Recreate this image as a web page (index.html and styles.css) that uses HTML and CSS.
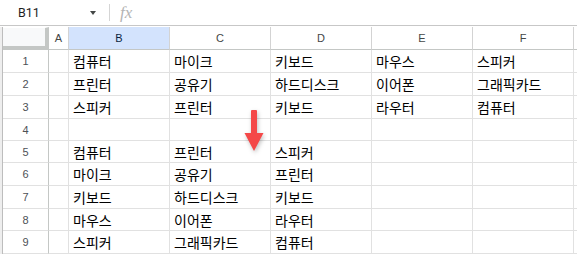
FILE: index.html
```html
<!DOCTYPE html>
<html lang="ko">
<head>
    <meta charset="UTF-8">
    <meta name="viewport" content="width=device-width, initial-scale=1.0">
    <title>Sheet</title>
    <link rel="stylesheet" href="styles.css">
</head>
<body>
    <div class="app">
        <div class="formula-bar">
            <span class="name-box">B11</span>
            <span class="caret"></span>
            <span class="separator"></span>
            <span class="fx">fx</span>
        </div>

        <div class="sheet">
            <div class="edge"></div>
            <div class="grid">
                <div class="corner"></div>
                <div class="col-head">A</div>
                <div class="col-head selected">B</div>
                <div class="col-head">C</div>
                <div class="col-head">D</div>
                <div class="col-head">E</div>
                <div class="col-head">F</div>
                <div class="col-head end"></div>

                <div class="row-num">1</div>
                <div class="cell"></div>
                <div class="cell">컴퓨터</div>
                <div class="cell">마이크</div>
                <div class="cell">키보드</div>
                <div class="cell">마우스</div>
                <div class="cell">스피커</div>
                <div class="cell end"></div>

                <div class="row-num">2</div>
                <div class="cell"></div>
                <div class="cell">프린터</div>
                <div class="cell">공유기</div>
                <div class="cell">하드디스크</div>
                <div class="cell">이어폰</div>
                <div class="cell">그래픽카드</div>
                <div class="cell end"></div>

                <div class="row-num">3</div>
                <div class="cell"></div>
                <div class="cell">스피커</div>
                <div class="cell">프린터</div>
                <div class="cell">키보드</div>
                <div class="cell">라우터</div>
                <div class="cell">컴퓨터</div>
                <div class="cell end"></div>

                <div class="row-num">4</div>
                <div class="cell"></div>
                <div class="cell"></div>
                <div class="cell"></div>
                <div class="cell"></div>
                <div class="cell"></div>
                <div class="cell"></div>
                <div class="cell end"></div>

                <div class="row-num">5</div>
                <div class="cell"></div>
                <div class="cell">컴퓨터</div>
                <div class="cell">프린터</div>
                <div class="cell">스피커</div>
                <div class="cell"></div>
                <div class="cell"></div>
                <div class="cell end"></div>

                <div class="row-num">6</div>
                <div class="cell"></div>
                <div class="cell">마이크</div>
                <div class="cell">공유기</div>
                <div class="cell">프린터</div>
                <div class="cell"></div>
                <div class="cell"></div>
                <div class="cell end"></div>

                <div class="row-num">7</div>
                <div class="cell"></div>
                <div class="cell">키보드</div>
                <div class="cell">하드디스크</div>
                <div class="cell">키보드</div>
                <div class="cell"></div>
                <div class="cell"></div>
                <div class="cell end"></div>

                <div class="row-num">8</div>
                <div class="cell"></div>
                <div class="cell">마우스</div>
                <div class="cell">이어폰</div>
                <div class="cell">라우터</div>
                <div class="cell"></div>
                <div class="cell"></div>
                <div class="cell end"></div>

                <div class="row-num">9</div>
                <div class="cell"></div>
                <div class="cell">스피커</div>
                <div class="cell">그래픽카드</div>
                <div class="cell">컴퓨터</div>
                <div class="cell"></div>
                <div class="cell"></div>
                <div class="cell end"></div>
            </div>
        </div>

        <svg class="arrow" width="22" height="46" viewBox="0 0 22 46">
            <polygon points="8,2.5 9,2 13,2 14,2.5 14,25 20.5,25 11,43 1.5,25 8,25" fill="#f44848" />
        </svg>
    </div>
</body>
</html>
```

FILE: styles.css
```css
body {
    margin: 0;
    background-color: #ffffff;
    overflow: hidden;
}

.app {
    position: relative;
    width: 577px;
    height: 254px;
    overflow: hidden;
}

.formula-bar {
    display: flex;
    align-items: center;
    height: 25px;
    border-bottom: 1px solid #c7c7c7;
    font-family: Roboto, "Liberation Sans", sans-serif;
}

.name-box {
    width: 72px;
    padding-left: 18px;
    font-size: 12.5px;
    color: #1f1f1f;
}

.caret {
    width: 0;
    height: 0;
    border-left: 3px solid transparent;
    border-right: 3px solid transparent;
    border-top: 4px solid #444746;
    margin-top: 1px;
}

.separator {
    width: 1px;
    height: 17px;
    margin-left: 13px;
    background-color: #d5d5d5;
}

.fx {
    margin-left: 10px;
    font-family: "Liberation Serif", serif;
    font-style: italic;
    font-size: 17px;
    color: #b4b4b4;
}

.sheet {
    display: flex;
    padding-top: 1px;
}

.edge {
    width: 2px;
    background-color: #eeeeee;
    border-right: 1px solid #bdbdbd;
}

.grid {
    display: grid;
    grid-template-columns: 46px 20px repeat(5, 101px) 3px;
    grid-template-rows: 23px 23px 23px 23px 22px 22px 23px 23px 22px 23px;
    font-family: "Noto Sans CJK KR", sans-serif;
}

.grid > div {
    box-sizing: border-box;
    border-right: 1px solid #e1e1e1;
    border-bottom: 1px solid #e1e1e1;
    display: flex;
    align-items: center;
    overflow: hidden;
    white-space: nowrap;
}

.grid > .end {
    border-right: none;
}

.corner {
    background-color: #f8f9fa;
    border-top: 1px solid #ffffff;
    border-right: 4px solid #c4c7c5 !important;
    border-bottom: 4px solid #c4c7c5 !important;
}

.col-head {
    justify-content: center;
    font-family: "Liberation Sans", Arial, sans-serif;
    font-size: 11px;
    color: #444746;
    border-right-color: #d3d3d3 !important;
    border-bottom-color: #c4c7c5 !important;
}

.col-head.selected {
    background-color: #d3e3fd;
    color: #0b1f3f;
}

.row-num {
    justify-content: center;
    font-family: "Liberation Sans", Arial, sans-serif;
    font-size: 11px;
    color: #4d5156;
    border-right-color: #c4c7c5 !important;
}

.cell {
    padding-left: 4px;
    font-size: 14px;
    color: #000000;
}

.arrow {
    position: absolute;
    left: 243px;
    top: 108px;
    filter: drop-shadow(1px 2px 2px rgba(0, 0, 0, 0.25));
}
```
